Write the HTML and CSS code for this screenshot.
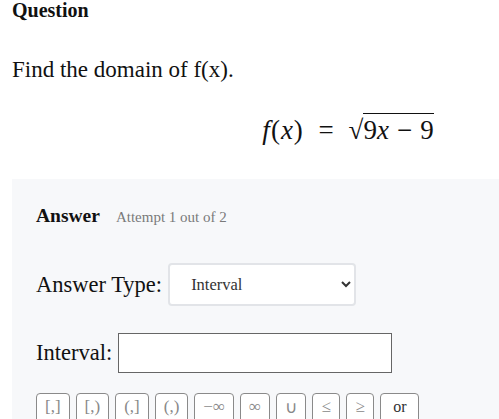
FILE: index.html
```html
<!DOCTYPE html>
<html>
<head>
    <title>Question</title>
    <meta name="viewport" content="width=device-width, initial-scale=1.0">
    <link rel="stylesheet" href="styles.css">
</head>
<body>
    <div class="page">
        <h2 class="question-title">Question</h2>
        <p class="question-text">Find the domain of f(x).</p>

        <div class="formula">
            <span class="mi">f</span><span class="mo">(</span><span class="mi">x</span><span class="mo">)</span>
            <span class="rel">=</span>
            <span class="sqrt"><span class="radical">√</span><span class="radicand">9<span class="mi">x</span><span class="bin">−</span>9</span></span>
        </div>

        <div class="answer">
            <div class="answer-head">
                <span class="answer-title">Answer</span>
                <span class="attempt">Attempt 1 out of 2</span>
            </div>

            <div class="field field-type">
                <label for="answerType">Answer Type:</label>
                <select id="answerType" class="type-select">
                    <option>Interval</option>
                </select>
            </div>

            <div class="field">
                <label for="interval">Interval:</label>
                <input id="interval" class="interval-input" type="text">
            </div>

            <div class="keys">
                <button class="key">[,]</button>
                <button class="key">[,)</button>
                <button class="key">(,]</button>
                <button class="key">(,)</button>
                <button class="key">−∞</button>
                <button class="key">∞</button>
                <button class="key">∪</button>
                <button class="key">≤</button>
                <button class="key">≥</button>
                <button class="key key-text">or</button>
            </div>
        </div>
    </div>
</body>
</html>
```

FILE: styles.css
```css
html, body {
    overflow: hidden;
}
body {
    margin: 0;
    font-family: "Liberation Serif", "DejaVu Serif", serif;
    color: #111;
    background: #fff;
}
.page {
    width: 700px;
    padding-left: 12px;
}
.question-title {
    margin: 0;
    font-size: 20px;
    line-height: 21px;
    font-weight: bold;
}
.question-text {
    margin: 35px 0 0;
    font-size: 23px;
    line-height: 28px;
}
.formula {
    margin-top: 30px;
    width: 672px;
    text-align: center;
    font-size: 27px;
    line-height: 32px;
}
.mi {
    font-style: italic;
}
.mo {
    margin: 0 1px;
}
.rel {
    margin: 0 8px;
}
.bin {
    margin: 0 8px;
}
.sqrt {
    display: inline-block;
}
.radicand {
    border-top: 1.5px solid #111;
    padding-top: 1px;
}
.answer {
    margin-top: 33px;
    background: #f7f8fa;
    padding: 26px 24px 20px;
    width: 640px;
}
.answer-head {
    display: flex;
    align-items: baseline;
    gap: 16px;
}
.answer-title {
    font-size: 19.5px;
    font-weight: bold;
}
.attempt {
    font-size: 15px;
    color: #7a7a7a;
}
.field {
    display: flex;
    align-items: center;
    gap: 6px;
    margin-top: 27px;
}
.field-type {
    margin-top: 36px;
}
.field label {
    font-size: 22.5px;
}
.type-select {
    width: 188px;
    height: 43px;
    border: 2px solid #e2e4e8;
    border-radius: 4px;
    background: #fff;
    padding: 0 10px 0 17px;
    font-family: "Liberation Serif", serif;
    font-size: 16.5px;
    color: #333;
}
.interval-input {
    width: 272px;
    height: 38px;
    border: 1px solid #666;
    padding: 0;
    background: #fff;
}
.keys {
    display: flex;
    gap: 6px;
    margin-top: 20px;
}
.key {
    height: 32px;
    min-width: 28px;
    padding: 0 8px 4px;
    border: 1px solid #8a8a8a;
    border-radius: 4px;
    background: #fff;
    font-family: "Liberation Serif", serif;
    font-size: 17px;
    color: #888;
}
.key-text {
    padding: 0 12px 4px;
    color: #333;
    font-size: 16px;
}
```
